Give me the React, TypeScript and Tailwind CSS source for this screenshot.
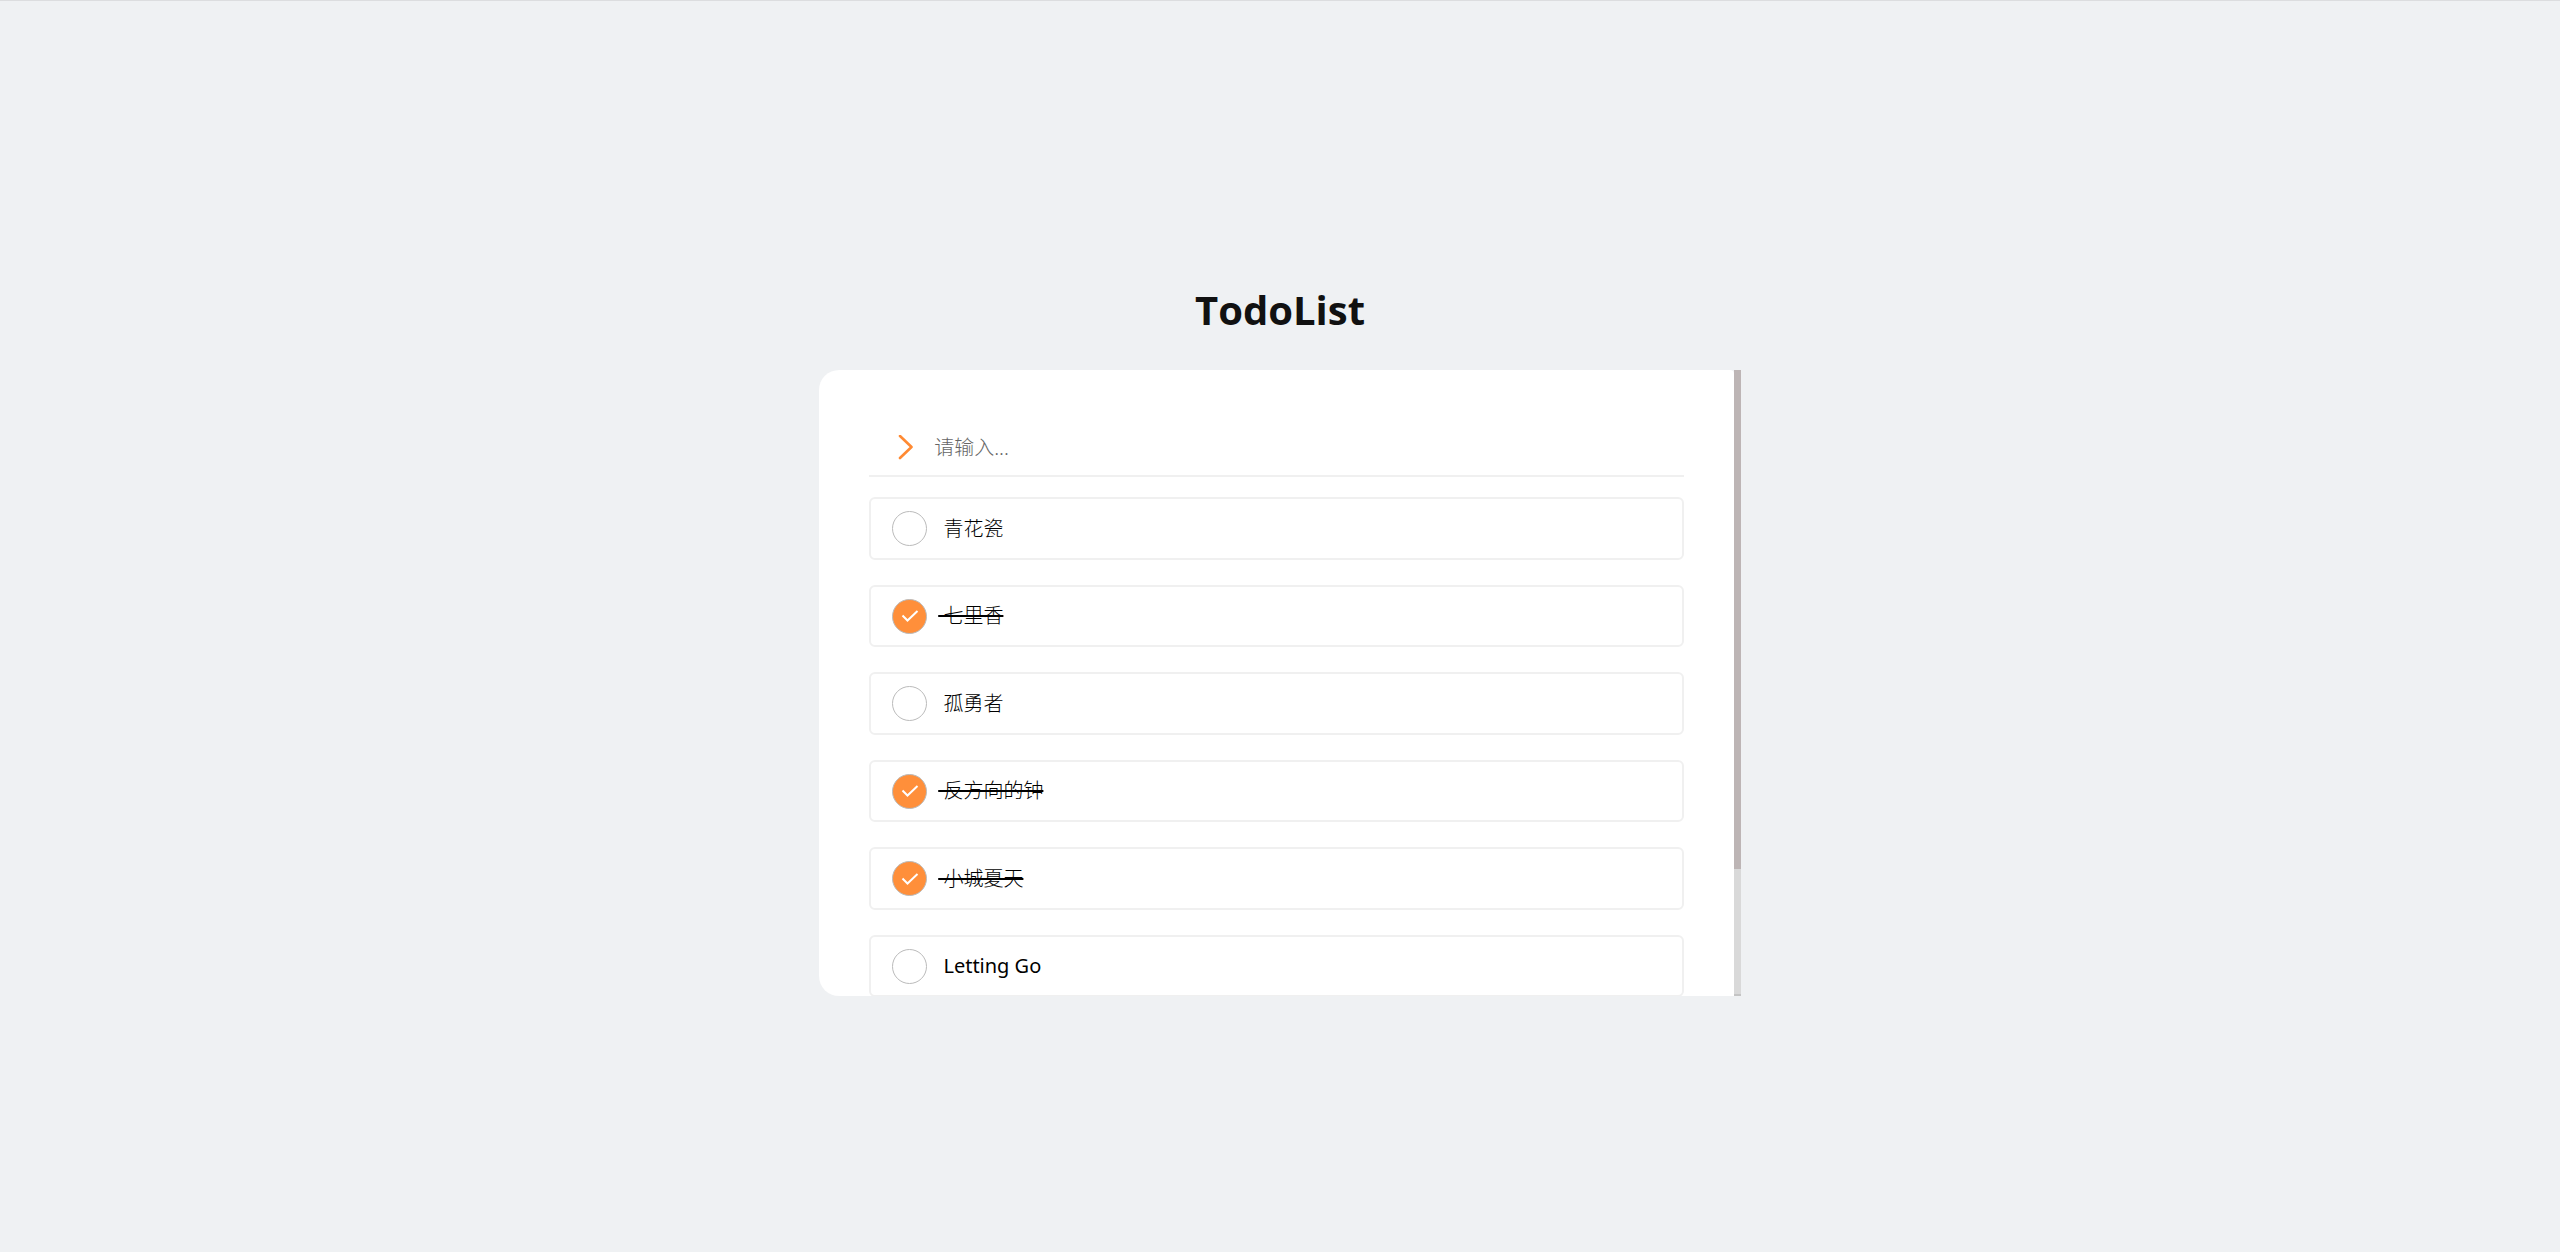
import { useState } from "react";

const initialItems = [
  { id: 1, text: "青花瓷", done: false },
  { id: 2, text: "七里香", done: true },
  { id: 3, text: "孤勇者", done: false },
  { id: 4, text: "反方向的钟", done: true },
  { id: 5, text: "小城夏天", done: true },
  { id: 6, text: "Letting Go", done: false },
];

// Latin titles use the regular weight, Chinese ones the light weight.
const isLatin = (text: string) => /^[\x20-\x7e]+$/.test(text);

export default function App() {
  const [items, setItems] = useState(initialItems);
  const [draft, setDraft] = useState("");

  const toggle = (id: number) =>
    setItems((list) => list.map((t) => (t.id === id ? { ...t, done: !t.done } : t)));

  return (
    <main className="flex min-h-screen flex-col items-center border-t border-[#dcdddf] bg-[#eff1f3] pt-[281px] font-['Noto_Sans','Noto_Sans_CJK_SC',sans-serif] text-black">
      <h1 className="font-['Open_Sans',sans-serif] text-[40px] leading-[56px] font-bold text-[#111]">TodoList</h1>

      <section className="mt-8 flex h-[50vh] w-[36vw]">
        <div className="min-w-0 flex-1 overflow-y-auto rounded-l-[20px] rounded-tr-sm bg-white px-[50px] pt-[50px] [scrollbar-width:none]">
          <form
            className="flex h-[57px] items-center border-b-2 border-[#f0f0f0] pl-[29px]"
            onSubmit={(e) => {
              e.preventDefault();
              if (!draft.trim()) return;
              setItems((list) => [...list, { id: list.length + 1, text: draft, done: false }]);
              setDraft("");
            }}
          >
            <svg width="16" height="26" viewBox="0 0 16 26" fill="none" aria-hidden="true">
              <path d="M2 1 L13.5 12 L2 23" stroke="#ff8a33" strokeWidth="2.6" strokeLinecap="round" strokeLinejoin="round" />
            </svg>
            <input
              aria-label="请输入"
              placeholder="请输入..."
              value={draft}
              onChange={(e) => setDraft(e.target.value)}
              className="ml-5 h-12 flex-1 bg-transparent text-xl font-light outline-none placeholder:text-[#666]"
            />
          </form>

          <ul className="mt-5 flex flex-col gap-[25px] pb-6">
            {items.map((t) => (
              <li key={t.id} className="h-[62px] shrink-0 rounded-md border-2 border-[#f0f0f0] odd:h-[63px]">
                <label className="flex h-full cursor-pointer items-center pl-[21px]">
                  <span className="grid size-[35px] place-items-center">
                    <input
                      type="checkbox"
                      checked={t.done}
                      onChange={() => toggle(t.id)}
                      className="col-start-1 row-start-1 size-[35px] appearance-none rounded-full border border-[#bbb] checked:bg-[#ff8f3a]"
                    />
                    {t.done && (
                      <svg className="pointer-events-none col-start-1 row-start-1" width="18" height="14" viewBox="0 0 18 14" fill="none" aria-hidden="true">
                        <path d="M1.5 6.5 L6.5 11.5 L16.5 2" stroke="#fff" strokeWidth="2" />
                      </svg>
                    )}
                  </span>
                  <span
                    className={[
                      "ml-[11px] text-xl whitespace-pre",
                      isLatin(t.text) ? "font-normal" : "font-light",
                      t.done ? "line-through decoration-2" : "",
                    ].join(" ")}
                  >
                    {" " + t.text}
                  </span>
                </label>
              </li>
            ))}
          </ul>
        </div>
        <div className="flex w-[7px] flex-col border-b-2 border-[#c4c4c4] bg-[#d9d9d9]">
          <div className="h-4/5 bg-[#bdb5b5]" />
        </div>
      </section>
    </main>
  );
}
